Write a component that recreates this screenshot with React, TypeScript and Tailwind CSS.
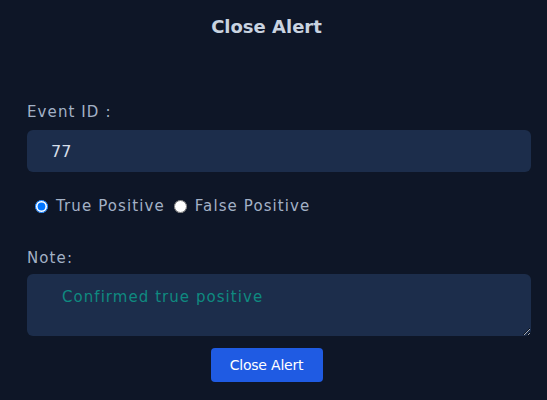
import React, { useState } from 'react';

const App: React.FC = () => {
    const [verdict, setVerdict] = useState<'true' | 'false'>('true');
    const [note, setNote] = useState('');

    return (
        <div className="min-h-[400px] w-full bg-[#0e1627] font-['DejaVu_Sans',sans-serif] text-[15px] text-[#a3b1c6]">
            <h2 className="pt-[15px] pr-[14px] text-center text-[18px] font-bold leading-[24px] text-[#c9d3e0]">Close Alert</h2>

            <form className="mt-[60px] pt-[3px] pl-[27px] pr-[16px]" onSubmit={(e) => e.preventDefault()}>
                <label className="block leading-[20px] tracking-[1.1px]">Event ID :</label>
                <input
                    type="text"
                    defaultValue="77"
                    className="mt-[8px] block h-[42px] w-full rounded-md bg-[#1c2d4b] px-[24px] font-['DejaVu_Sans',sans-serif] text-[16px] text-[#d6dde8] outline-none"
                />

                <div className="mt-[24px] flex items-center pl-[8px] leading-[20px] tracking-[1.1px]">
                    <label className="flex items-center">
                        <input
                            type="radio"
                            name="verdict"
                            checked={verdict === 'true'}
                            onChange={() => setVerdict('true')}
                            className="m-0 h-[13px] w-[13px] accent-[#0075ff]"
                        />
                        <span className="ml-[8px]">True Positive</span>
                    </label>
                    <label className="ml-[9px] flex items-center">
                        <input
                            type="radio"
                            name="verdict"
                            checked={verdict === 'false'}
                            onChange={() => setVerdict('false')}
                            className="m-0 h-[13px] w-[13px]"
                        />
                        <span className="ml-[8px]">False Positive</span>
                    </label>
                </div>

                <label className="mt-[32px] block leading-[20px] tracking-[1.1px]">Note:</label>
                <textarea
                    value={note}
                    onChange={(e) => setNote(e.target.value)}
                    placeholder="Confirmed true positive"
                    className="mt-[6px] block h-[62px] w-full rounded-md bg-[#1c2d4b] px-[35px] py-[12px] text-[15px] tracking-[1.05px] text-[#0f9488] outline-none placeholder:text-[#0f8a80]"
                />

                <div className="mt-[12px] flex justify-center pr-[25px]">
                    <button
                        type="submit"
                        className="h-[34px] w-[112px] rounded-[4px] bg-[#1f5be3] text-[14px] text-white tracking-[-0.2px]"
                    >
                        Close Alert
                    </button>
                </div>
            </form>
        </div>
    );
};

export default App;
